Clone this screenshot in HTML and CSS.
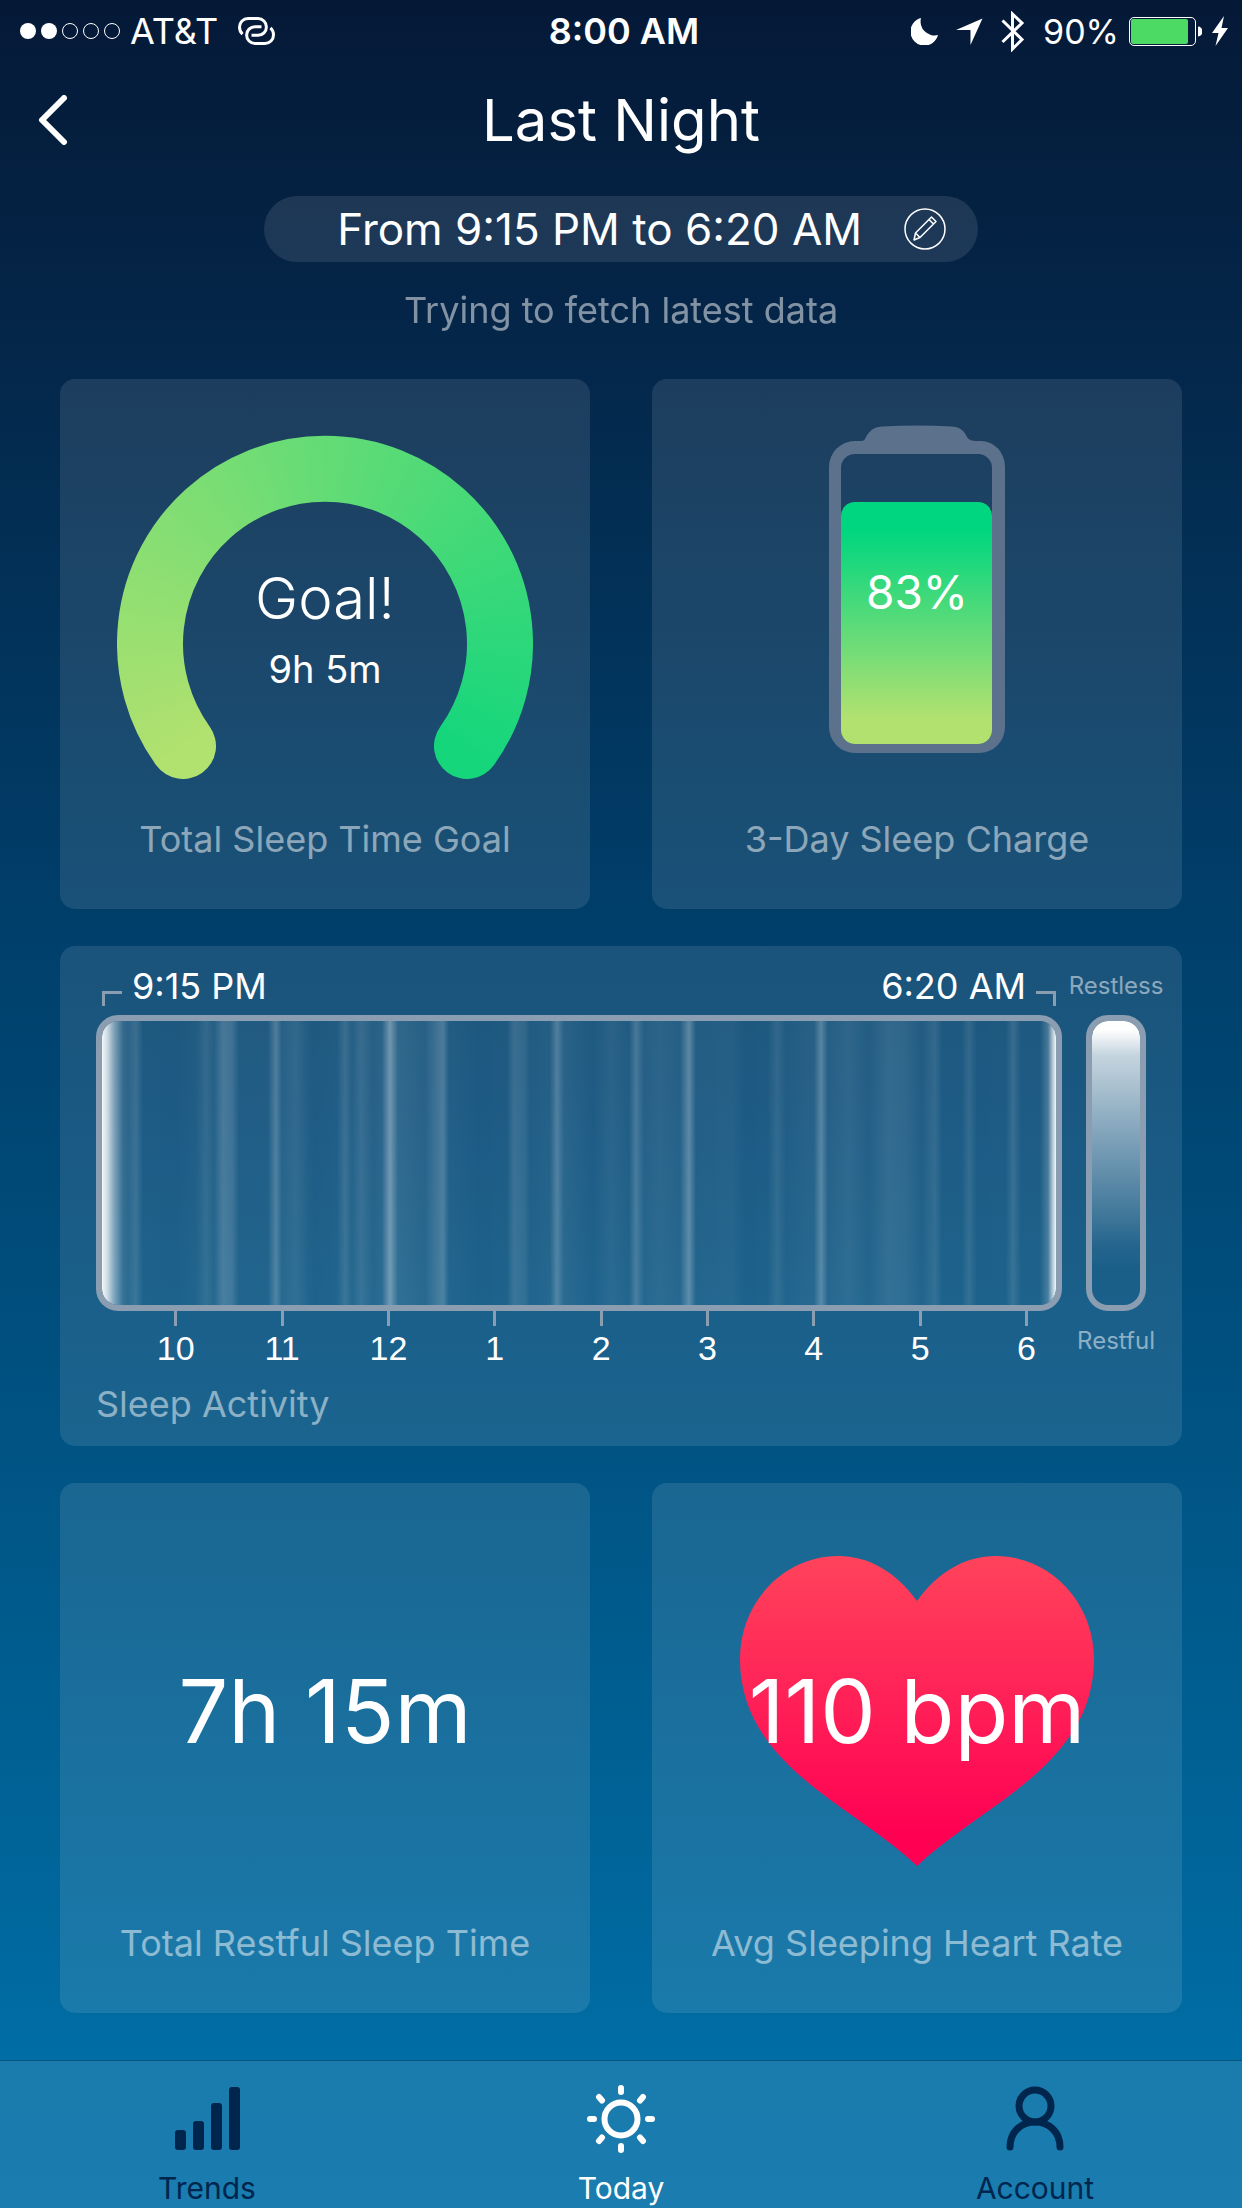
FILE: index.html
```html
<!DOCTYPE html>
<html lang="en">
<head>
    <meta charset="UTF-8">
    <meta name="viewport" content="width=device-width, initial-scale=1.0">
    <title>Last Night</title>
    <link rel="stylesheet" href="styles.css">
</head>
<body>
    <div class="status">
        <div class="status_left">
            <svg width="100" height="16" viewBox="0 0 100 16" aria-hidden="true">
                <g fill="#fff"><circle cx="8" cy="8" r="8"/><circle cx="29" cy="8" r="8"/></g>
                <g fill="none" stroke="#fff"><circle cx="50" cy="8" r="7.5"/><circle cx="71" cy="8" r="7.5"/><circle cx="92" cy="8" r="7.5"/></g>
            </svg>
            <span class="carrier">AT&amp;T</span>
            <svg class="link" width="37" height="28" viewBox="0 0 37 28" fill="none" stroke="#fff" stroke-width="3" aria-hidden="true">
                <path d="M4.5 17.2C2.3 15.2 1.5 12.6 1.5 10A8.5 8.5 0 0 1 10 1.5H20A8.4 8.4 0 0 1 20 18.3H13.5"/>
                <path d="M32.5 10.8C34.7 12.8 35.5 15.4 35.5 18A8.5 8.5 0 0 1 27 26.5H17A8.4 8.4 0 0 1 17 9.7H23.5"/>
            </svg>
        </div>
        <strong class="clock">8:00 AM</strong>
        <div class="status_right">
            <svg width="27" height="27" viewBox="0 0 27 27" fill="#fff" aria-hidden="true"><path d="M10 0A14 14 0 1 0 27 17A14 14 0 0 1 10 0Z"/></svg>
            <svg width="27" height="27" viewBox="0 0 27 27" fill="#fff" aria-hidden="true"><path d="M26.5 .5L0 12H14.5V27Z"/></svg>
            <svg width="24" height="41" viewBox="0 0 24 41" fill="none" stroke="#fff" stroke-width="3" aria-hidden="true"><path d="M1.5 9.5L21 28.5L11.5 38V3L21 12L1.5 31"/></svg>
            <span class="percent">90%</span>
            <svg width="73" height="29" viewBox="0 0 73 29" aria-hidden="true">
                <rect x=".5" y=".5" width="66" height="28" rx="4.5" fill="none" stroke="#fff"/>
                <rect x="2" y="2" width="57" height="25" rx="2" fill="#4cd964"/>
                <path d="M69 9.5A4.5 5 0 0 1 69 19.5Z" fill="#fff"/>
            </svg>
            <svg width="16" height="30" viewBox="0 0 16 30" fill="#fff" aria-hidden="true"><path d="M12 0L0 17H6.5L3.5 30L16 12H9.5Z"/></svg>
        </div>
    </div>

    <header class="header">
        <button class="back" aria-label="Back">
            <svg width="30" height="50" viewBox="0 0 30 50" fill="none" stroke="#fff" stroke-width="6" stroke-linecap="round" stroke-linejoin="round"><path d="M26 3L4 25L26 47"/></svg>
        </button>
        <h1>Last Night</h1>
    </header>

    <main>
        <button class="range">
            <span>From 9:15 PM to 6:20 AM</span>
            <svg width="42" height="42" viewBox="0 0 42 42" fill="none" stroke="#fff" stroke-width="1.5" stroke-linejoin="round" aria-hidden="true">
                <circle cx="21" cy="21" r="20"/>
                <path d="M10 32L11.5 25L27.5 9L32 13.5L16 29.5ZM11.5 25L16 29.5M25 11.5L29.5 16"/>
            </svg>
        </button>
        <p class="fetching">Trying to fetch latest data</p>

        <div class="cards">
            <section class="card">
                <div class="figure">
                    <svg class="gauge" viewBox="0 0 416 344" aria-hidden="true">
                        <mask id="ring" maskUnits="userSpaceOnUse" x="0" y="0" width="416" height="344">
                            <path d="M66 311A175 175 0 1 1 350 311" fill="none" stroke="#fff" stroke-width="66" stroke-linecap="round"/>
                        </mask>
                        <g mask="url(#ring)">
                            <foreignObject width="416" height="416"><div class="gauge_fill"></div></foreignObject>
                        </g>
                    </svg>
                    <div class="gauge_text">
                        <p class="goal">Goal!</p>
                        <p class="slept">9h 5m</p>
                    </div>
                </div>
                <h2>Total Sleep Time Goal</h2>
            </section>

            <section class="card">
                <div class="figure charge">
                    <svg class="battery" viewBox="0 0 176 328" aria-hidden="true">
                        <linearGradient id="chargeFill" x1="0" y1="0" x2="0" y2="1">
                            <stop offset=".12" stop-color="#00d67f"/>
                            <stop offset=".5" stop-color="#59db79"/>
                            <stop offset=".9" stop-color="#b3e170"/>
                        </linearGradient>
                        <path fill="#5c718c" fill-rule="evenodd" d="M36 14C39 8 43 2 53 1.5C76 0 100 0 123 1.5C133 2 136 8 138 12C140 15 143 16 148 16H152A24 26 0 0 1 176 42V302A26 26 0 0 1 150 328H26A26 26 0 0 1 0 302V42A26 26 0 0 1 26 16H30C33 16 35 16 36 14ZM26 29A14 14 0 0 0 12 43V305A14 14 0 0 0 26 319H149A14 14 0 0 0 163 305V43A14 14 0 0 0 149 29Z"/>
                        <rect x="12" y="77" width="151" height="242" rx="14" fill="url(#chargeFill)"/>
                    </svg>
                    <p class="charge_value">83%</p>
                </div>
                <h2>3-Day Sleep Charge</h2>
            </section>

            <section class="card activity">
                <div class="night">
                    <div class="times"><i></i><span>9:15 PM</span><span class="end">6:20 AM</span><i class="end_mark"></i></div>
                    <div class="chart"></div>
                    <ol class="hours">
                        <li>10</li><li>11</li><li>12</li><li>1</li><li>2</li><li>3</li><li>4</li><li>5</li><li>6</li>
                    </ol>
                    <h2>Sleep Activity</h2>
                </div>
                <div class="legend">
                    <span class="restless">Restless</span>
                    <div class="scale"></div>
                    <span class="restful">Restful</span>
                </div>
            </section>

            <section class="card">
                <div class="figure"><p class="value">7h 15m</p></div>
                <h2>Total Restful Sleep Time</h2>
            </section>

            <section class="card">
                <div class="figure">
                    <svg class="heart" viewBox="0 0 354 310" aria-hidden="true">
                        <linearGradient id="heartFill" x1="0" y1="0" x2="0" y2="1">
                            <stop offset="0" stop-color="#ff435b"/>
                            <stop offset=".9" stop-color="#ff0053"/>
                        </linearGradient>
                        <path fill="url(#heartFill)" d="M177 45C156 16 129 0 98 0C44 0 0 46 0 103C0 210 115 250 177 310C239 250 354 210 354 103C354 46 310 0 256 0C225 0 198 16 177 45Z"/>
                    </svg>
                    <p class="value">110 bpm</p>
                </div>
                <h2>Avg Sleeping Heart Rate</h2>
            </section>
        </div>
    </main>

    <nav class="tabs">
        <a href="#trends">
            <svg width="72" height="72" viewBox="0 0 72 72" fill="currentColor" aria-hidden="true">
                <rect x="4" y="47" width="11" height="20" rx="3"/><rect x="22" y="38" width="11" height="29" rx="3"/><rect x="40" y="20" width="11" height="47" rx="3"/><rect x="58" y="4" width="11" height="63" rx="3"/>
            </svg>
            <span>Trends</span>
        </a>
        <a href="#today" class="on">
            <svg width="72" height="72" viewBox="0 0 72 72" fill="none" stroke="currentColor" stroke-width="6" stroke-linecap="round" aria-hidden="true">
                <circle cx="36" cy="36" r="16.5"/>
                <path d="M36 5V9M36 63V67M5 36H9M63 36H67M14 14L17 17.5M58 14L55 17.5M14 58L17 54.5M58 58L55 54.5"/>
            </svg>
            <span>Today</span>
        </a>
        <a href="#account">
            <svg width="72" height="72" viewBox="0 0 72 72" fill="none" stroke="currentColor" stroke-width="7" stroke-linecap="round" aria-hidden="true">
                <circle cx="36" cy="23" r="16"/>
                <path d="M11 64C11 49 22 39 36 39S61 49 61 64"/>
            </svg>
            <span>Account</span>
        </a>
    </nav>

    <script>
        const chart = document.querySelector(".chart");

        // [position, restlessness], position runs from 0 to 954
        const samples = [
            [0,.95],[5,.8],[12,.45],[21,.12],[26,.08],[34,.14],[41,.02],[73,.01],[94,.03],[104,.11],[112,.05],[121,.2],[130,.16],[137,.03],
            [166,.03],[174,.23],[180,.06],[194,.1],[207,.03],[212,.02],[235,.03],[243,.14],[250,.05],[259,.13],[271,.05],[280,.08],
            [288,.38],[296,.1],[323,.06],[341,.22],[347,.04],[377,.01],[405,.02],[412,.14],[423,.1],[428,.03],[448,.05],[455,.24],
            [462,.07],[491,.02],[509,.07],[527,.03],[534,.2],[542,.05],[557,.08],[578,.05],[587,.29],[594,.04],[630,.05],[643,.01],
            [666,.02],[675,.1],[684,.03],[701,.05],[712,.06],[719,.27],[726,.05],[747,.09],[766,.04],[787,.11],[804,.09],[820,.03],
            [833,.11],[840,.02],[860,.02],[867,.11],[875,.01],[904,.02],[911,.13],[919,.02],[938,.02],[946,.2],[951,.7],[954,.95]
        ];

        const stops = samples.map(([x, a]) => `rgba(255,255,255,${a}) ${x / 954 * 100}%`);
        chart.style.backgroundImage = `linear-gradient(to right, ${stops.join(",")})`;
    </script>
</body>
</html>
```

FILE: styles.css
```css
* { margin:0; padding:0; box-sizing:border-box;}
ul,ol,li { list-style:none;}
a { text-decoration:none;}
button { border:0; background:none; color:inherit; font:inherit; cursor:pointer;}
svg { display:block; flex-shrink:0;}

body { min-height:100vh; display:flex; flex-direction:column; color:#fff; font-family:Inter, "Liberation Sans", sans-serif; background:linear-gradient(#051937 0%, #04274a 16%, #003f6b 42%, #005484 66%, #006da4 93%, #006ea6 100%);}

.status { display:grid; grid-template-columns:1fr auto 1fr; align-items:center; height:62px; padding:0 14px 0 20px; font-size:34px;}
.status_left, .status_right { display:flex; align-items:center;}
.status_left { gap:10px;}
.link { margin-left:10px;}
.status_right { justify-content:flex-end; gap:18px;}
.percent { margin-right:-8px;}
.carrier, .clock { font-size:36px;}
.clock { font-weight:600;}
.status_right svg:last-child { margin-left:-8px;}

.header { display:grid; grid-template-columns:1fr auto 1fr; align-items:center; height:116px; padding:0 38px;}
.back { justify-self:start;}
.header h1 { font-size:58px; font-weight:400;}

main { flex:1; padding:18px 60px 46px;}
.range { display:flex; align-items:center; justify-content:flex-end; gap:42px; width:714px; max-width:100%; height:66px; margin:0 auto; padding-right:32px; border-radius:33px; background-color:rgba(255,255,255,.1); font-size:44px; line-height:60px;}
.fetching { margin:26px 0 47px; text-align:center; font-size:36px; line-height:44px; opacity:.5;}

.cards { display:grid; grid-template-columns:1fr 1fr; gap:37px 62px;}
.card { display:flex; flex-direction:column; aspect-ratio:1; padding:18px 0 48px; border-radius:15px; background-color:rgba(255,255,255,.1);}
.card h2 { text-align:center; font-size:36px; line-height:44px; font-weight:400; color:rgba(255,255,255,.5);}
.figure { flex:1; display:grid; place-items:center;}
.figure > * { grid-area:1/1;}
.value { font-size:88px;}

.gauge { width:416px;}
.gauge_fill { height:416px; background:conic-gradient(from 180deg, #b1e16f 54deg, #16d67c 306deg);}
.gauge_text { padding-top:52px; text-align:center;}
.goal { font-size:58px; line-height:72px; font-weight:300;}
.slept { font-size:38px; line-height:70px;}

.charge { padding-bottom:36px;}
.battery { width:176px;}
.charge_value { padding-top:6px; font-size:46px;}
.heart { width:354px;}

.activity { grid-column:1/3; flex-direction:row; gap:24px; aspect-ratio:auto; padding:18px 36px 20px;}
.activity h2 { margin-top:12px; text-align:left;}
.night { flex:1;}
.times { display:flex; gap:10px; height:51px; padding:0 6px; font-size:36px; line-height:44px;}
.times i { width:20px; height:15px; margin-top:27px; border:solid #8b9db0; border-width:3px 0 0 3px;}
.times .end { margin-left:auto;}
.times .end_mark { border-width:3px 3px 0 0;}
.chart, .scale { height:296px; border:6px solid #8b9db0; border-radius:22px; background-origin:padding-box; background-clip:padding-box;}
.hours { display:flex; padding-left:2.75%; font-family:"Liberation Sans", Arial, sans-serif; font-size:34px; line-height:44px;}
.hours li { flex:0 0 11.32%; text-align:center;}
.hours li::before { content:""; display:block; width:3px; height:15px; margin:0 auto; background-color:#8b9db0;}

.legend { width:60px; display:flex; flex-direction:column; align-items:center; font-size:24px; line-height:44px; color:rgba(255,255,255,.5);}
.restless { height:51px;}
.scale { width:100%; background-image:linear-gradient(#fff 3%, rgba(255,255,255,.75) 12%, rgba(255,255,255,.54) 31%, rgba(255,255,255,.33) 52%, rgba(255,255,255,.16) 69%, rgba(255,255,255,.04) 80%, transparent 88%);}
.restful { margin-top:8px;}

.tabs { display:grid; grid-template-columns:repeat(3, 1fr); padding:22px 0 2px; border-top:1px solid #07557f; background-color:rgba(255,255,255,.1);}
.tabs a { display:flex; flex-direction:column; align-items:center; gap:15px; color:#00264d; font-size:30px; line-height:36px;}
.tabs a.on { color:#fff;}
```
